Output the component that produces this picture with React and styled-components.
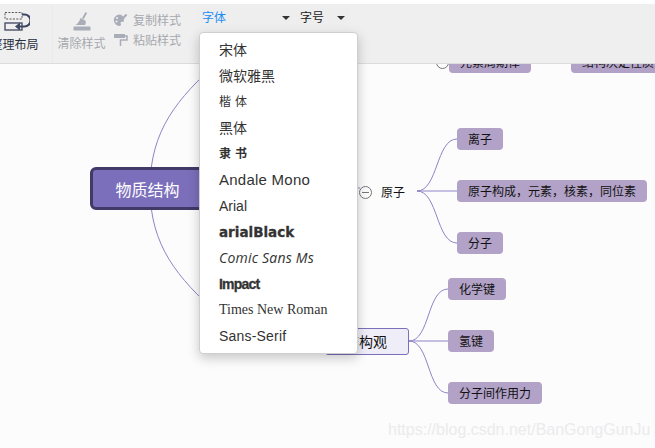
import React from 'react';
import styled, { createGlobalStyle } from 'styled-components';

const CJK = '"Noto Sans CJK SC", "Liberation Sans", sans-serif';

const fonts = [
  { name: '宋体', family: CJK, size: 14, weight: 400, shift: -1 },
  { name: '微软雅黑', family: CJK, size: 14, weight: 400, shift: -1 },
  { name: '楷体', family: CJK, size: 12, weight: 400, spacing: 4, shift: -1 },
  { name: '黑体', family: CJK, size: 14, weight: 400, shift: -1 },
  { name: '隶书', family: CJK, size: 12, weight: 700, spacing: 4, shift: -1 },
  { name: 'Andale Mono', family: '"Liberation Sans", sans-serif', size: 15, weight: 400, spacing: 0.25 },
  { name: 'Arial', family: '"Liberation Sans", sans-serif', size: 14, weight: 400 },
  { name: 'arialBlack', family: '"DejaVu Sans", sans-serif', size: 13.5, weight: 700, stroke: 0.3 },
  { name: 'Comic Sans Ms', family: '"Open Sans", sans-serif', size: 14, weight: 400, italic: true, spacing: 0.2 },
  { name: 'Impact', family: '"Liberation Sans", sans-serif', size: 14, weight: 700, spacing: -0.8, stroke: 0.3 },
  { name: 'Times New Roman', family: '"Liberation Serif", serif', size: 14, weight: 400 },
  { name: 'Sans-Serif', family: '"Liberation Sans", sans-serif', size: 14, weight: 400, spacing: 0.2 },
];

const topics = [
  { label: '元素周期律', x: 449, y: -13 },
  { label: '结构决定性质', x: 571, y: -13 },
  { label: '离子', x: 457, y: 64 },
  { label: '原子构成，元素，核素，同位素', x: 457, y: 116 },
  { label: '分子', x: 457, y: 168 },
  { label: '化学键', x: 448, y: 214 },
  { label: '氢键', x: 448, y: 266 },
  { label: '分子间作用力', x: 448, y: 318 },
];

export default function App() {
  return (
    <Page>
      <GlobalStyle />
      <Toolbar>
        <LayoutGroup>
          <LayoutIcon width="26" height="22" viewBox="0 0 26 22">
            <rect x="1" y="1.5" width="17" height="6.5" fill="none" stroke="#555" strokeDasharray="2 1.4" />
            <rect x="1" y="12" width="17" height="7" fill="none" stroke="#4a5068" strokeWidth="1.4" />
            <path d="M18 3.5h2.5a6 6 0 0 1 0 12H13" fill="none" stroke="#3f4763" strokeWidth="2.2" />
            <path d="M16 11.5v8l-5-4z" fill="#3f4763" />
          </LayoutIcon>
          <ToolLabel>整理布局</ToolLabel>
        </LayoutGroup>
        <ClearGroup>
          <svg width="20" height="21" viewBox="0 0 20 21">
            <path d="M13.5 1l1.6 1-3.4 6.2-1.7-1z" fill="#a9adb8" />
            <path d="M8.5 7l5 2.8c.6 1.6.3 3-.5 4.2H3.5C6 12.5 7.6 10 8.5 7z" fill="#a9adb8" />
            <rect x="1.5" y="15.5" width="17" height="4" rx="0.5" fill="#a9adb8" />
          </svg>
          <ToolLabel $muted>清除样式</ToolLabel>
        </ClearGroup>
        <StyleGroup>
          <StyleRow>
            <svg width="15" height="14" viewBox="0 0 15 14">
              <path d="M6.5 1.5a5.7 5.7 0 1 0 0 11.4c1.8 0 1.7-1.5 1.2-2.3-.5-.9.1-1.8 1.2-1.8h1.800c1-3.500-1-7.300-4.200-7.300z" fill="#a9adb8" />
              <circle cx="4" cy="5" r="1" fill="#efefef" />
              <circle cx="3.5" cy="8.5" r="1" fill="#efefef" />
              <path d="M13.5 1.5L8.5 7" stroke="#a9adb8" strokeWidth="2" />
            </svg>
            <ToolLabel $muted>复制样式</ToolLabel>
          </StyleRow>
          <StyleRow>
            <svg width="15" height="14" viewBox="0 0 15 14">
              <rect x="1" y="1" width="11" height="4" fill="#a9adb8" />
              <path d="M12 3h2v4H7.5v6" fill="none" stroke="#a9adb8" strokeWidth="1.5" />
            </svg>
            <ToolLabel $muted>粘贴样式</ToolLabel>
          </StyleRow>
        </StyleGroup>
        <SelectGroup>
          <Select $width={98} $active>
            字体
            <Caret />
          </Select>
          <Select $width={55}>
            字号
            <Caret />
          </Select>
        </SelectGroup>
      </Toolbar>

      <Canvas>
        <Links viewBox="0 0 655 384" width="655" height="384">
          <path d="M150 124C150 66 178 34 218 -2" />
          <path d="M150 124C150 182 178 214 218 250" />
          <path d="M150 124H360" />
          <path d="M417 127C438 127 436 75 457 75" />
          <path d="M417 127H457" />
          <path d="M417 127C438 127 436 179 457 179" />
          <path d="M409 277C430 277 427 225 448 225" />
          <path d="M409 277H448" />
          <path d="M409 277C430 277 427 329 448 329" />
        </Links>
        <RootNode>物质结构</RootNode>
        <Toggle $x={359} $y={122} />
        <Toggle $x={436} $y={-8} />
        <AtomNode>原子</AtomNode>
        <GroupNode>结构观</GroupNode>
        {topics.map((topic) => (
          <Topic key={topic.label} $x={topic.x} $y={topic.y}>
            {topic.label}
          </Topic>
        ))}
        <Watermark>https://blog.csdn.net/BanGongGunJu</Watermark>
      </Canvas>

      <FontMenu>
        {fonts.map((font) => (
          <FontItem
            key={font.name}
            $family={font.family}
            $size={font.size}
            $weight={font.weight}
            $spacing={font.spacing}
            $italic={font.italic}
            $stroke={font.stroke}
            $shift={font.shift}
          >
            {font.name}
          </FontItem>
        ))}
      </FontMenu>
    </Page>
  );
}

const GlobalStyle = createGlobalStyle`
  html, body {
    margin: 0;
    background: #fff;
    overflow: hidden;
  }
`;

const Page = styled.div`
  position: relative;
  width: 655px;
  height: 448px;
  padding-top: 4px;
  box-sizing: border-box;
  display: flex;
  flex-direction: column;
  overflow: hidden;
  font-family: ${CJK};
  font-size: 12px;
  color: #111;
`;

const Toolbar = styled.div`
  position: relative;
  z-index: 2;
  flex: none;
  height: 60px;
  box-sizing: border-box;
  display: flex;
  background: #efefef;
  border-bottom: 1px solid #dcdcdc;
`;

const ToolLabel = styled.span`
  font-size: 12px;
  line-height: 16px;
  white-space: nowrap;
  color: ${(p) => (p.$muted ? '#a6a8ae' : '#2b3040')};
`;

const LayoutGroup = styled.div`
  width: 48px;
  margin-left: -9.5px;
  margin-right: 13.5px;
  padding-top: 7px;
  display: flex;
  flex-direction: column;
  align-items: center;
  gap: 3px;
`;

const LayoutIcon = styled.svg`
  margin-left: 5px;
`;

const ClearGroup = styled.div`
  width: 58px;
  padding-top: 7px;
  display: flex;
  flex-direction: column;
  align-items: center;
  gap: 3px;
  border-left: 1px solid #eaeaea;
  box-sizing: border-box;
`;

const StyleGroup = styled.div`
  width: 87px;
  padding: 8px 0 0 3px;
  box-sizing: border-box;
  display: flex;
  flex-direction: column;
  gap: 4px;
`;

const StyleRow = styled.div`
  display: flex;
  align-items: center;
  gap: 5px;
`;

const SelectGroup = styled.div`
  display: flex;
`;

const Select = styled.div`
  width: ${(p) => p.$width}px;
  height: 24px;
  box-sizing: border-box;
  padding: 0 5px;
  display: flex;
  align-items: center;
  justify-content: space-between;
  font-size: 12px;
  background: #eeeeee;
  color: ${(p) => (p.$active ? '#1c8cf5' : '#222')};
`;

const Caret = styled.i`
  width: 0;
  height: 0;
  margin-top: 3px;
  border-left: 4px solid transparent;
  border-right: 4px solid transparent;
  border-top: 4px solid #333;
`;

const Canvas = styled.div`
  position: relative;
  flex: 1;
  background: #fcfcfd;
`;

const Links = styled.svg`
  position: absolute;
  left: 0;
  top: 0;
  fill: none;
  stroke: #8e84c6;
  stroke-width: 1;
`;

const RootNode = styled.div`
  position: absolute;
  left: 90px;
  top: 103px;
  width: 115px;
  height: 43px;
  box-sizing: border-box;
  display: flex;
  align-items: center;
  justify-content: center;
  background: #7b6fbb;
  border: 3px solid #3f3a66;
  border-radius: 6px;
  color: #fff;
  font-size: 16px;
`;

const Toggle = styled.span`
  position: absolute;
  left: ${(p) => p.$x}px;
  top: ${(p) => p.$y}px;
  width: 13px;
  height: 13px;
  box-sizing: border-box;
  border: 1px solid #777;
  border-radius: 50%;
  background: #fcfcfd;

  &::after {
    content: '';
    position: absolute;
    left: 2px;
    right: 2px;
    top: 5px;
    height: 1px;
    background: #777;
  }
`;

const AtomNode = styled.div`
  position: absolute;
  left: 381px;
  top: 119px;
  line-height: 18px;
  background: #fcfcfd;
`;

const GroupNode = styled.div`
  position: absolute;
  left: 325px;
  top: 264px;
  width: 84px;
  height: 27px;
  box-sizing: border-box;
  padding-left: 19px;
  line-height: 25px;
  font-size: 14px;
  background: #efedf8;
  border: 1px solid #7b6fbb;
  border-radius: 3px;
`;

const Topic = styled.div`
  position: absolute;
  left: ${(p) => p.$x}px;
  top: ${(p) => p.$y}px;
  height: 22px;
  box-sizing: border-box;
  padding: 0 11px;
  line-height: 22px;
  white-space: nowrap;
  background: #b2a2c7;
  border-radius: 4px;
`;

const Watermark = styled.div`
  position: absolute;
  left: 388px;
  top: 357px;
  font-family: "Liberation Sans", sans-serif;
  font-size: 16px;
  line-height: 18px;
  white-space: nowrap;
  color: #ebebeb;
`;

const FontMenu = styled.div`
  position: absolute;
  z-index: 3;
  left: 198.5px;
  top: 32px;
  width: 159px;
  height: 322px;
  box-sizing: border-box;
  padding-top: 4px;
  background: #fff;
  border: 1px solid #cfcfcf;
  border-radius: 4px;
  box-shadow: 0 4px 12px rgba(0, 0, 0, 0.22);
`;

const FontItem = styled.div`
  height: 26px;
  padding-left: 19.5px;
  line-height: ${(p) => 26 + (p.$shift || 0) * 2}px;
  white-space: nowrap;
  color: #333;
  font-family: ${(p) => p.$family};
  font-size: ${(p) => p.$size}px;
  font-weight: ${(p) => p.$weight};
  font-style: ${(p) => (p.$italic ? 'italic' : 'normal')};
  letter-spacing: ${(p) => p.$spacing || 0}px;
  -webkit-text-stroke: ${(p) => p.$stroke || 0}px #333;
`;
